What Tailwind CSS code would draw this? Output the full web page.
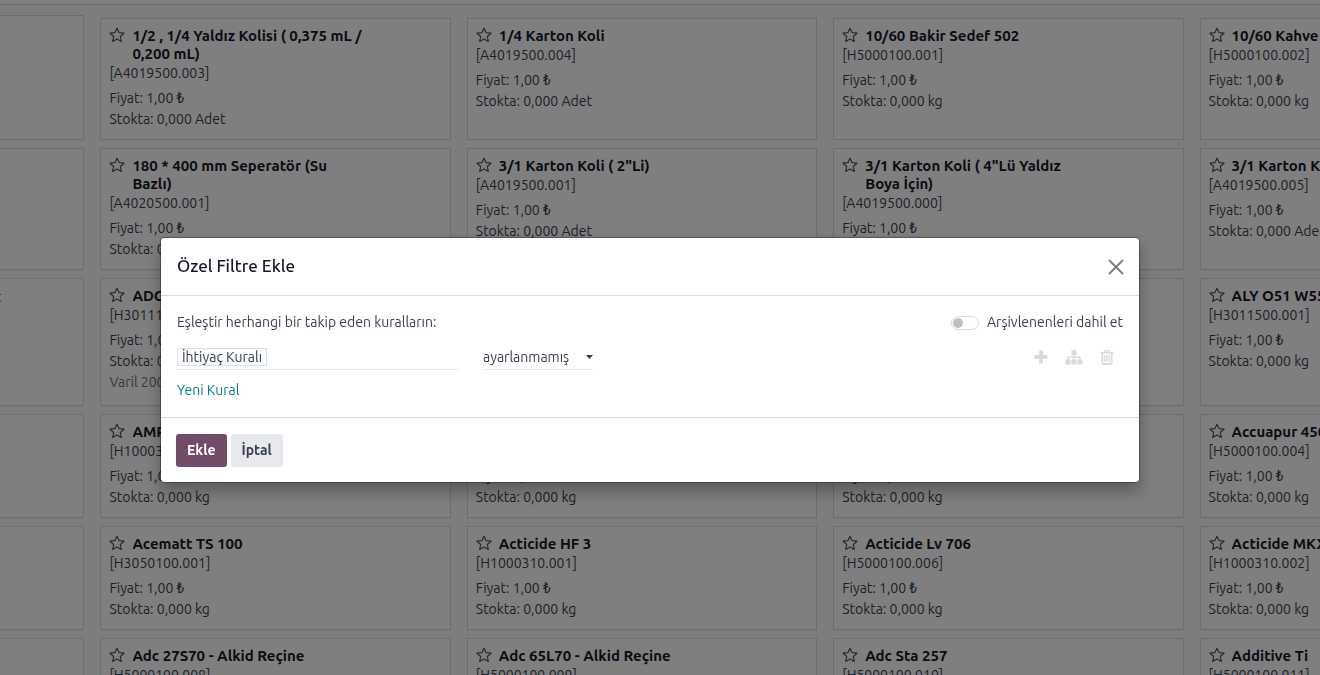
<!DOCTYPE html>
<html lang="tr">

<head>
  <meta charset="UTF-8" />
  <meta name="viewport" content="width=device-width, initial-scale=1.0" />
  <title>Ürünler</title>
  <script src="https://cdn.jsdelivr.net/npm/@tailwindcss/browser@4"></script>
</head>

<body class="h-screen overflow-hidden bg-[#f7fcf9] font-[Ubuntu,Roboto,'Noto_Sans',sans-serif] text-sm text-[#374151]">
  <svg class="hidden">
    <symbol id="star" viewBox="0 0 16 16">
      <path d="M8 1.200l2 4.400 5 .6-3.700 3.300 1 4.900L8 12l-4.300 2.400 1-4.900L1 6.200l5-.6z" fill="none" stroke="currentColor" stroke-width="1.200" stroke-linejoin="round" />
    </symbol>
  </svg>

  <header class="h-[5px] border-b border-[#d5d8dc] bg-white"></header>

  <main class="h-full overflow-hidden pt-[13px]">
    <div id="products" class="ml-[-266px] grid w-[calc(100%+496px)] grid-cols-5 gap-x-4 gap-y-2"></div>
  </main>

  <div class="fixed inset-0 flex items-start justify-center bg-black/50 pt-[237px] pr-5">
    <div role="dialog" aria-labelledby="dialog-title" class="w-full max-w-[980px] rounded border border-black/30 bg-white bg-clip-padding shadow-[0_8px_16px_rgba(0,0,0,0.3)]">
      <header class="flex h-[58px] items-center justify-between border-b border-[#d8dadd] pr-[15px] pl-4">
        <h4 id="dialog-title" class="text-[17px] font-medium text-[#111827]">Özel Filtre Ekle</h4>
        <button type="button" aria-label="Kapat" class="text-[#7d7d7d]">
          <svg class="size-4" viewBox="0 0 16 16" fill="none" stroke="currentColor" stroke-width="1.8" stroke-linecap="round">
            <path d="M1.5 1.5l13 13M14.5 1.5l-13 13" />
          </svg>
        </button>
      </header>

      <div class="px-4 pt-4 pb-4">
        <div class="flex items-center justify-between leading-[21px]">
          <span>Eşleştir herhangi bir takip eden kuralların:</span>
          <label class="flex items-center gap-2">
            <input type="checkbox" role="switch" class="h-3.5 w-7 appearance-none rounded-full border border-[#d8dadd] bg-white p-px before:block before:size-2.5 before:rounded-full before:bg-[#bfbfbf] checked:bg-[#714b67]" />
            Arşivlenenleri dahil et
          </label>
        </div>

        <div class="mt-[11px] flex items-center">
          <div class="flex h-[26px] w-[282px] items-start border-b border-[#e7e9ed]">
            <button type="button" class="mt-1 h-[18px] border border-[#d8e0e6] bg-[#f9fafb] px-1 leading-4">İhtiyaç Kuralı</button>
          </div>
          <div class="relative ml-6 h-[26px] w-[110px] border-b border-[#e7e9ed]">
            <select aria-label="Değer" class="h-[25px] w-full appearance-none bg-transparent">
              <option>ayarlanmamış</option>
              <option>ayarlanmış</option>
            </select>
            <svg class="pointer-events-none absolute top-[11px] right-0 h-1 w-[7px]" viewBox="0 0 7 4" fill="currentColor">
              <path d="M0 0h7L3.5 4z" />
            </svg>
          </div>
          <div class="mr-[9px] ml-auto flex items-center gap-[17px] text-[#d8dadd]">
            <button type="button" aria-label="Kural ekle">
              <svg class="size-3.5" viewBox="0 0 14 14" fill="currentColor">
                <path d="M6 .5h2.2q.8 0 .8.8V5h3.700q.8 0 .8.8v2.400q0 .8-.8.8H9v3.700q0 .8-.8.8H6q-.9 0-.9-.8V9H1.300q-.8 0-.8-.8V5.800q0-.8.8-.8h3.800V1.300q0-.8.9-.8z" />
              </svg>
            </button>
            <button type="button" aria-label="Grup ekle">
              <svg class="h-4 w-[18px]" viewBox="0 0 18 16" fill="currentColor">
                <rect x="6.500" y="1" width="5" height="5" rx=".8" />
                <rect x=".5" y="10.500" width="5" height="5" rx=".8" />
                <rect x="6.500" y="10.500" width="5" height="5" rx=".8" />
                <rect x="12.500" y="10.500" width="5" height="5" rx=".8" />
                <path d="M9 5.500v5.500M3 11V8.200h12V11" fill="none" stroke="currentColor" stroke-width="1.200" />
              </svg>
            </button>
            <button type="button" aria-label="Sil">
              <svg class="h-4 w-3.5" viewBox="0 0 14 16" fill="none" stroke="currentColor">
                <path d="M.5 3.700h13" stroke-width="1.500" />
                <path d="M4.500 3.300l.6-1.700h3.800l.6 1.700" stroke-width="1.200" />
                <path d="M2.300 4v9.600q0 1.400 1.200 1.400h7q1.200 0 1.200-1.400V4" stroke-width="1.800" />
                <path d="M4.900 6v7M7 6v7M9.100 6v7" stroke-width="1.300" />
              </svg>
            </button>
          </div>
        </div>

        <a href="#" class="mt-2.5 inline-block leading-[21px] text-[#017e84]">Yeni Kural</a>
      </div>

      <footer class="flex gap-1 border-t border-[#d8dadd] px-[15px] pt-4 pb-[15px] font-semibold">
        <button type="button" class="h-[33px] rounded-[3px] bg-[#714b67] px-[11px] pb-0.5 text-white">Ekle</button>
        <button type="button" class="h-[33px] rounded-[3px] bg-[#e7e9ed] px-[11px] pb-0.5">İptal</button>
      </footer>
    </div>
  </div>

  <script>
    // first card of each row is mostly outside the viewport
    const rows = [
      [
        { first: true },
        { name: '1/2 , 1/4 Yaldız Kolisi ( 0,375 mL / 0,200 mL)', code: 'A4019500.003', unit: 'Adet' },
        { name: '1/4 Karton Koli', code: 'A4019500.004', unit: 'Adet' },
        { name: '10/60 Bakir Sedef 502', code: 'H5000100.001', unit: 'kg' },
        { name: '10/60 Kahve', code: 'H5000100.002', unit: 'kg' },
      ],
      [
        {},
        { name: '180 * 400 mm Seperatör (Su Bazlı)', code: 'A4020500.001', unit: 'Adet' },
        { name: '3/1 Karton Koli ( 2"Li)', code: 'A4019500.001', unit: 'Adet' },
        { name: '3/1 Karton Koli ( 4"Lü Yaldız Boya İçin)', code: 'A4019500.000', unit: 'Adet' },
        { name: '3/1 Karton Koli', code: 'A4019500.005', unit: 'Adet' },
      ],
      [
        { tail: 't' },
        { name: 'ADC', code: 'H3011100.001', unit: 'kg', note: 'Varil 200' },
        { name: 'ADC', code: 'H3011100.002', unit: 'kg' },
        { name: 'ADC', code: 'H3011100.003', unit: 'kg' },
        { name: 'ALY O51 W55', code: 'H3011500.001', unit: 'kg' },
      ],
      [
        {},
        { name: 'AMP', code: 'H1000310.003', unit: 'kg' },
        { name: 'AMP', code: 'H1000310.004', unit: 'kg' },
        { name: 'AMP', code: 'H1000310.005', unit: 'kg' },
        { name: 'Accuapur 450', code: 'H5000100.004', unit: 'kg' },
      ],
      [
        {},
        { name: 'Acematt TS 100', code: 'H3050100.001', unit: 'kg' },
        { name: 'Acticide HF 3', code: 'H1000310.001', unit: 'kg' },
        { name: 'Acticide Lv 706', code: 'H5000100.006', unit: 'kg' },
        { name: 'Acticide MKX', code: 'H1000310.002', unit: 'kg' },
      ],
      [
        {},
        { name: 'Adc 27S70 - Alkid Reçine', code: 'H5000100.008', unit: 'kg' },
        { name: 'Adc 65L70 - Alkid Reçine', code: 'H5000100.009', unit: 'kg' },
        { name: 'Adc Sta 257', code: 'H5000100.010', unit: 'kg' },
        { name: 'Additive Ti', code: 'H5000100.011', unit: 'kg' },
      ],
    ];

    const card = (p) => {
      if (!p.name) {
        return `<article class="border border-[#d8dadd] bg-white pt-2 pr-[82px] text-right text-[#5f8fb0] ${p.first ? '-mt-[3px]' : ''}">${p.tail || ''}</article>`;
      }
      return `
        <article class="border border-[#d8dadd] bg-white px-2 pt-2 pb-[9px] leading-[21px]">
          <div class="flex gap-[7px] pr-[78px] leading-[18px]">
            <button type="button" aria-label="Favori" class="size-4 shrink-0"><svg class="size-4 text-[#4b5563]"><use href="#star" /></svg></button>
            <h2 class="text-[15px] font-semibold text-[#111827]">${p.name}</h2>
          </div>
          <p>[${p.code}]</p>
          <p class="mt-1">Fiyat: 1,00 ₺</p>
          <p>Stokta: 0,000 ${p.unit}</p>
          ${p.note ? `<p class="mb-[3px] text-[#6b7280]">${p.note}</p>` : ''}
        </article>`;
    };

    document.getElementById('products').innerHTML = rows.flat().map(card).join('');
  </script>
</body>

</html>
